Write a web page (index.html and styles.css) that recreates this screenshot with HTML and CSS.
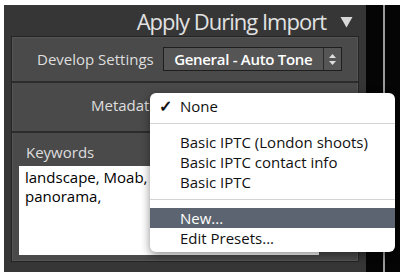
FILE: index.html
```html
<!DOCTYPE html>
<html lang="en">
<head>
    <meta charset="UTF-8">
    <title>Apply During Import</title>
    <link rel="stylesheet" href="styles.css">
</head>
<body>
    <div class="window">
        <div class="panel">
            <div class="panel-header">
                <span class="panel-title">Apply During Import</span>
                <svg class="panel-arrow" width="13" height="12" viewBox="0 0 13 12">
                    <path d="M0.5 1 L12.5 1 L6.5 11.5 Z" fill="#d8d8d8"/>
                </svg>
            </div>
            <div class="panel-body">
                <div class="row row-develop">
                    <span class="label">Develop Settings</span>
                    <div class="select">
                        <span class="select-value">General - Auto Tone</span>
                        <span class="select-spin">
                            <svg width="9" height="13" viewBox="0 0 9 13">
                                <path d="M1 5 L4.5 1 L8 5 Z" fill="#ddd"/>
                                <path d="M1 8 L4.5 12 L8 8 Z" fill="#ddd"/>
                            </svg>
                        </span>
                    </div>
                </div>
                <div class="row row-metadata">
                    <span class="label">Metadata</span>
                </div>
                <div class="row row-keywords">
                    <span class="label">Keywords</span>
                    <div class="keyword-box">landscape, Moab, Utah,<br>panorama,</div>
                </div>
            </div>
        </div>
        <div class="sidebar">
            <div class="sidebar-line"></div>
        </div>

        <ul class="menu">
            <li class="menu-item"><span class="check">&#10003;</span>None</li>
            <li class="menu-sep"></li>
            <li class="menu-item">Basic IPTC (London shoots)</li>
            <li class="menu-item">Basic IPTC contact info</li>
            <li class="menu-item">Basic IPTC</li>
            <li class="menu-sep"></li>
            <li class="menu-item active">New...</li>
            <li class="menu-item">Edit Presets...</li>
        </ul>
    </div>
</body>
</html>
```

FILE: styles.css
```css
* {
    margin: 0;
    padding: 0;
    box-sizing: border-box;
}

html, body {
    width: 400px;
    height: 278px;
    overflow: hidden;
    background-color: #fff;
    font-family: "Open Sans", sans-serif;
}

.window {
    position: relative;
    display: flex;
    margin-top: 5px;
    margin-left: 4px;
    height: 267px;
}

.panel {
    width: 362px;
    background-color: #363636;
    display: flex;
    flex-direction: column;
    padding: 0 7px 10px 7px;
}

.panel-header {
    height: 35px;
    display: flex;
    justify-content: flex-end;
    align-items: center;
    color: #e2e2e2;
    padding-right: 6px;
}

.panel-title {
    font-size: 22px;
    letter-spacing: -1px;
}

.panel-arrow {
    margin-left: 14px;
    margin-top: 2px;
}

.panel-body {
    flex: 1;
    background-color: #4a4a4a;
    border: 1px solid #242424;
    box-shadow: inset 0 0 0 1px #555;
    display: flex;
    flex-direction: column;
}

.row {
    border-bottom: 2px solid #2c2c2c;
}

.label {
    color: #dedede;
    font-size: 15px;
}

.row-develop {
    height: 46px;
    display: flex;
    align-items: center;
    padding-left: 25px;
}

.select {
    margin-left: 9px;
    width: 179px;
    height: 24px;
    display: flex;
    border: 1px solid #1e1e1e;
    background-color: #555;
}

.select-value {
    flex: 1;
    color: #fff;
    font-size: 15px;
    font-weight: 600;
    text-align: center;
    line-height: 22px;
    letter-spacing: -0.3px;
}

.select-spin {
    width: 18px;
    border-left: 1px solid #2a2a2a;
    display: flex;
    align-items: center;
    justify-content: center;
}

.row-metadata {
    height: 50px;
    display: flex;
    align-items: center;
    padding-bottom: 4px;
    padding-left: 79px;
}

.row-keywords {
    flex: 1;
    border-bottom: none;
    padding: 9px 0 6px 7px;
}

.row-keywords .label {
    display: block;
    padding-left: 7px;
    line-height: 20px;
}

.keyword-box {
    margin-top: 4px;
    width: 300px;
    height: 89px;
    background-color: #fff;
    color: #000;
    font-size: 15px;
    line-height: 19px;
    padding: 2px 6px;
}

.sidebar {
    flex: 1;
    background-color: #050505;
    padding-left: 17px;
}

.sidebar-line {
    width: 2px;
    height: 100%;
    background-color: #9a9a9a;
}

.menu {
    position: absolute;
    left: 146px;
    top: 88px;
    width: 245px;
    list-style: none;
    background-color: #fff;
    border-radius: 6px;
    padding: 3px 0 4px 0;
    box-shadow: 0 3px 10px rgba(0, 0, 0, 0.45);
}

.menu-item {
    position: relative;
    height: 20px;
    line-height: 20px;
    font-size: 15px;
    color: #111;
    padding-left: 30px;
    letter-spacing: 0;
}

.menu-item .check {
    position: absolute;
    left: 9px;
    font-size: 16px;
    font-weight: 700;
}

.menu-item.active {
    background-color: #5b6470;
    color: #fff;
}

.menu-sep {
    height: 1px;
    background-color: #d4d4d4;
    margin: 7px 0 8px 0;
}
```
